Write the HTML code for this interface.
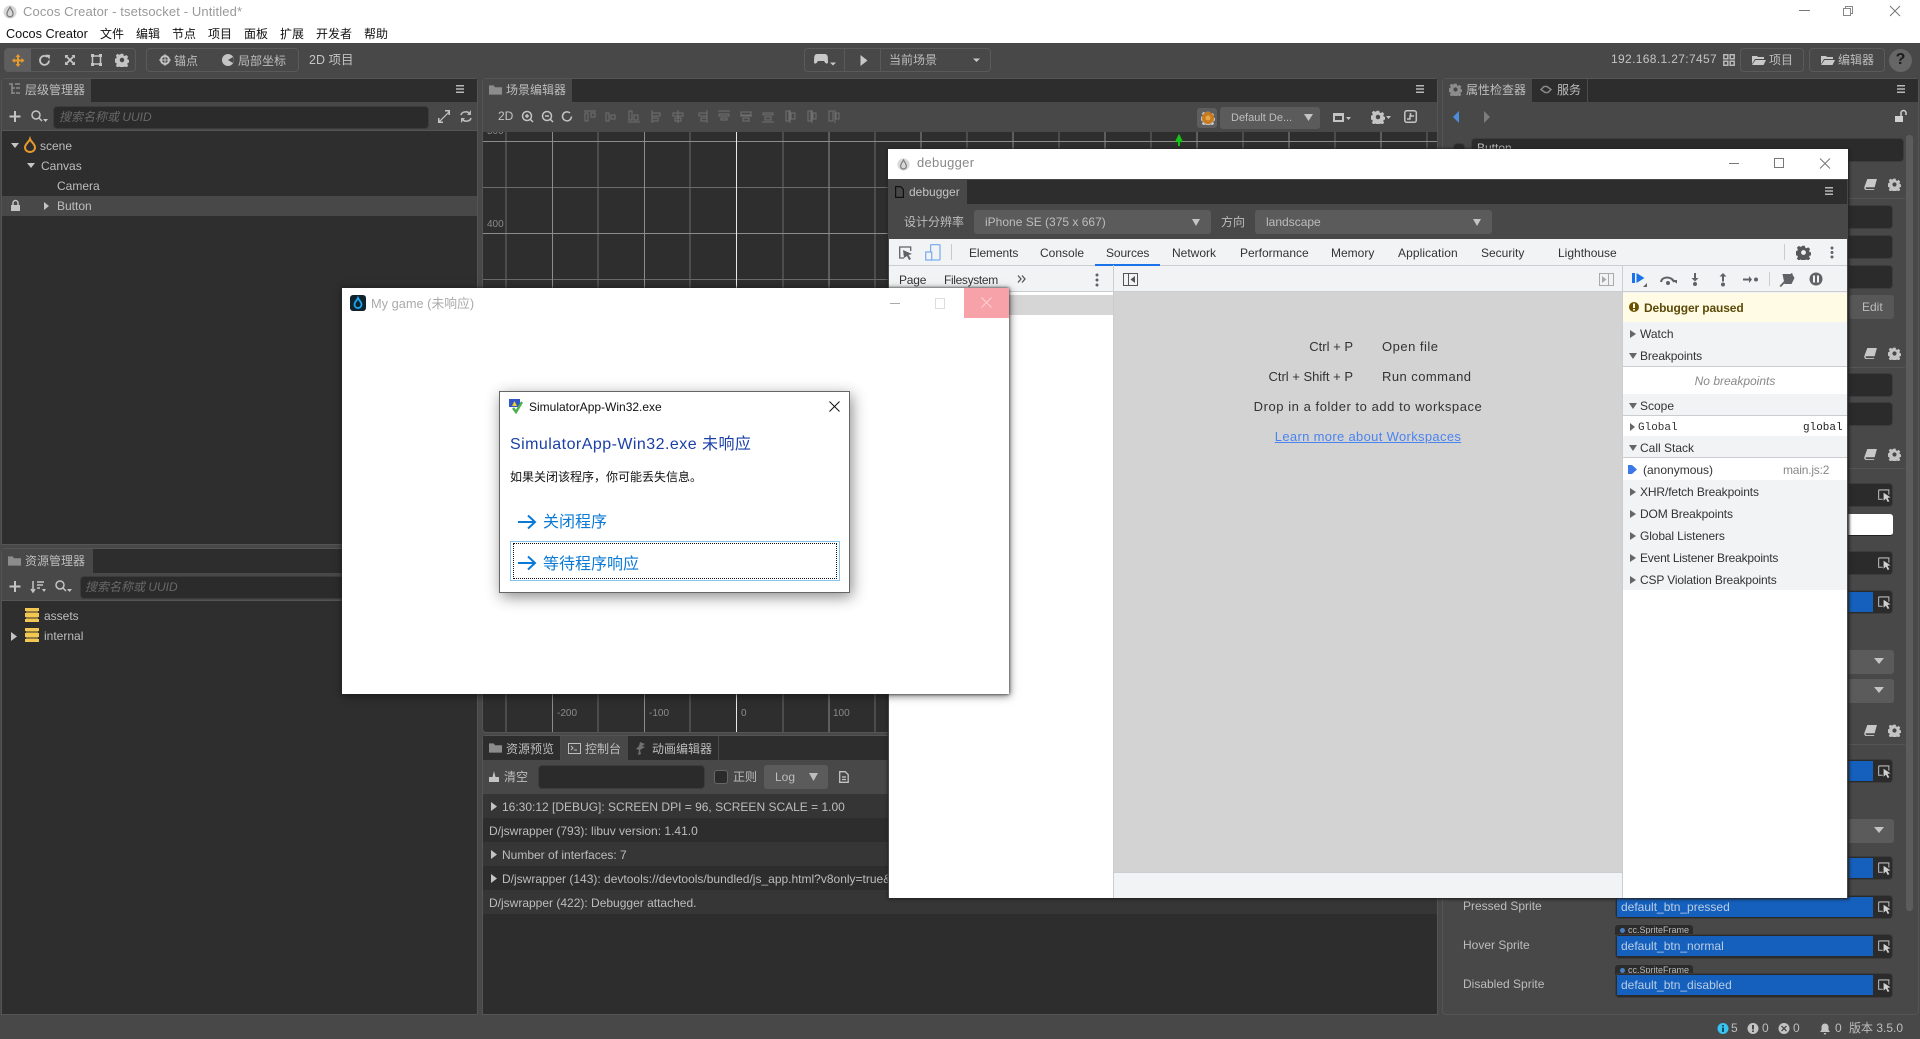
<!DOCTYPE html>
<html lang="zh"><head><meta charset="utf-8"><title>Cocos Creator - tsetsocket - Untitled*</title>
<style>
html,body{margin:0;padding:0}
body{width:1920px;height:1039px;overflow:hidden;position:relative;background:#484848;font:12px/16px "Liberation Sans","Noto Sans CJK SC",sans-serif;color:#bdbdbd}
.a{position:absolute;box-sizing:border-box}
.t{position:absolute;white-space:nowrap;line-height:16px}
svg{position:absolute;overflow:visible}
.in{position:absolute;box-sizing:border-box;background:#2b2b2b;border:1px solid #3c3c3c;border-radius:4px}
.sel{position:absolute;background:#5b5b5b;border-radius:3px}
.tab{position:absolute;background:#484848;box-sizing:border-box}
.h{position:absolute;background:#2d2d2d}
.m{color:#111}
.dv{color:#333}
.sb{letter-spacing:-.12px}
.blue{position:absolute;background:#1560bd}
.tag{position:absolute;background:#2b2b2b;border-radius:3px 3px 0 0;height:10px;width:78px;left:1615px;font-size:9px;line-height:10px;color:#bbb;white-space:nowrap;padding-left:13px;box-sizing:border-box}
.tag:before{content:"";position:absolute;left:5px;top:3px;width:5px;height:5px;border-radius:3px;background:#4a7fc4}
</style></head><body>
<svg width="0" height="0" style="position:absolute"><defs>
<symbol id="gear" viewBox="0 0 14 14"><path fill="#c4c4c4" d="M5.6 0h2.8l.4 2 1.4.6 1.7-1.1 2 2-1.1 1.7.6 1.4 2 .4v2.8l-2 .4-.6 1.4 1.1 1.7-2 2-1.700-1.100-1.400.6-.4 2H5.600l-.4-2-1.400-.6-1.700 1.100-2-2 1.100-1.700-.6-1.400-2-.4V5.600l2-.4.6-1.400-1.100-1.700 2-2 1.700 1.100 1.400-.6zM7 4.500a2.500 2.500 0 1 0 0 5 2.500 2.500 0 0 0 0-5z" transform="translate(.7 .7) scale(.9)"/></symbol>
<symbol id="book" viewBox="0 0 14 12"><path fill="#c8c8c8" d="M3.500 0H14l-2.500 9H1.800C1.300 10.500 2.300 11 3 11h8v1H2.500C.8 12-.2 10.500.4 8.500z"/></symbol>
<symbol id="pick" viewBox="0 0 14 14"><path fill="none" stroke="#bdbdbd" stroke-width="1.100" d="M.7 1h11v5M5 11H.7V1"/><path fill="#d0d0d0" d="M6 4l7.500 5-3.300.6 2 3.600-1.800.8-1.900-3.600L6 12.600z"/></symbol>
<symbol id="folder" viewBox="0 0 14 10"><path fill="#c8c8c8" d="M0 1h5l1 1h6v2H3L0 9zM3.500 5H14l-2.500 5H0z"/></symbol>
<symbol id="bars" viewBox="0 0 8 8"><path fill="#b8b8b8" d="M0 0h8v1.500H0zM0 3.250h8v1.500H0zM0 6.500h8V8H0z"/></symbol>
<symbol id="fold" viewBox="0 0 14 12"><path fill="#8c8c8c" d="M0 1h5l1.500 2H14v8H0z"/></symbol>
<symbol id="drop" viewBox="0 0 16 16"><circle cx="8" cy="8" r="7.500" fill="#d8d8d8"/><path fill="none" stroke="#7d7d7d" stroke-width="1.500" d="M8 2.500C6 6 4.500 7.500 4.500 10a3.500 3.500 0 0 0 7 0C11.500 7.500 10 6 8 2.500z"/></symbol>
</defs></svg>

<!-- title bar -->
<div class="a" style="left:0;top:0;width:1920px;height:43px;background:#fff"></div>
<svg style="left:3px;top:4px" width="14" height="16"><use href="#drop" width="14" height="14" y="1"/></svg>
<div class="t" style="left:23px;top:4px;font-size:13px;color:#999;letter-spacing:.12px">Cocos Creator - tsetsocket - Untitled*</div>
<div class="t m" style="left:6px;top:26px;font-size:12.700px">Cocos Creator</div>
<div class="t m" style="left:100px;top:26px">文件</div><div class="t m" style="left:136px;top:26px">编辑</div><div class="t m" style="left:172px;top:26px">节点</div><div class="t m" style="left:208px;top:26px">项目</div><div class="t m" style="left:244px;top:26px">面板</div><div class="t m" style="left:280px;top:26px">扩展</div><div class="t m" style="left:316px;top:26px">开发者</div><div class="t m" style="left:364px;top:26px">帮助</div>
<svg style="left:1798px;top:5px" width="115" height="12"><path d="M1 5.500h11" stroke="#777" fill="none"/><path d="M45.500 3.500h7v7h-7zM47.500 3.500v-2h7v7h-2" stroke="#888" fill="none"/><path d="M92 1l10 10M102 1L92 11" stroke="#777" fill="none"/></svg>

<!-- main toolbar -->
<div class="a" style="left:4px;top:48px;width:132px;height:24px;border:1px solid #5a5a5a;border-radius:4px"></div>
<div class="a" style="left:5px;top:49px;width:26px;height:22px;background:#5e5e5e;border-radius:3px 0 0 3px"></div>
<svg style="left:12px;top:54px" width="120" height="13">
<path fill="#e79a2c" d="M6 0l2.500 3H7v2.500h2.500V4l3 2.500-3 2.500V7.500H7V10h1.500L6 13 3.500 10H5V7.500H2.500V9l-2.500-2.500L2.500 4v1.500H5V3H3.500z"/>
<path fill="none" stroke="#c4c4c4" stroke-width="1.800" d="M35.500 3a4.500 4.500 0 1 0 1.500 3.500"/><path fill="#c4c4c4" d="M33.500 0.500l4.500 .5-.5 4.500z"/>
<path fill="none" stroke="#c4c4c4" stroke-width="1.800" d="M54 2l8 8M62 2l-8 8"/><path fill="#c4c4c4" d="M53 1h3.500L53 4.500zM63 1v3.500L59.500 1zM53 11V7.500L56.500 11zM63 11h-3.500L63 7.500z"/>
<path fill="none" stroke="#c4c4c4" stroke-width="1.500" d="M80.500 2h8v8h-8z"/><path fill="#c4c4c4" d="M79 0h3v3h-3zM87 0h3v3h-3zM79 9h3v3h-3zM87 9h3v3h-3z"/>
</svg>
<svg style="left:115px;top:53px" width="14" height="14"><use href="#gear" width="14" height="14"/></svg>
<div class="a" style="left:146px;top:48px;width:153px;height:24px;border:1px solid #5a5a5a;border-radius:4px"></div>
<svg style="left:159px;top:54px" width="80" height="13"><circle cx="6" cy="6" r="4" fill="none" stroke="#c4c4c4" stroke-width="2"/><path stroke="#c4c4c4" d="M6 0v12M0 6h12"/><circle cx="69" cy="6" r="6" fill="#c4c4c4"/><path fill="#484848" d="M69 6l5-3 1 3-1 3z"/></svg>
<div class="t" style="left:174px;top:53px">锚点</div><div class="t" style="left:238px;top:53px">局部坐标</div>
<div class="t" style="left:309px;top:52px;font-size:12.500px;color:#c4c4c4">2D 项目</div>

<div class="a" style="left:804px;top:48px;width:187px;height:24px;border:1px solid #5a5a5a;border-radius:4px"></div>
<div class="a" style="left:844px;top:49px;width:1px;height:22px;background:#5a5a5a"></div><div class="a" style="left:880px;top:49px;width:1px;height:22px;background:#5a5a5a"></div>
<svg style="left:814px;top:53px" width="170" height="14"><path fill="#c8c8c8" d="M3 1h8c1.500 0 2.500 1 2.800 3L14 9c0 2-2 2-3 .5L10 8H4L3 9.500C2 11 0 11 0 9l.2-5C.5 2 1.500 1 3 1z"/><path fill="#c8c8c8" d="M16 9.500h6l-3 3zM46.500 2l7 5.500-7 5.500zM159 5.500h7l-3.500 3.500z"/></svg>
<div class="t" style="left:889px;top:52px">当前场景</div>

<div class="t" style="left:1611px;top:51px;color:#c4c4c4;letter-spacing:.35px">192.168.1.27:7457</div>
<svg style="left:1723px;top:54px" width="12" height="12"><path fill="none" stroke="#b8b8b8" stroke-width="1.500" d="M.8.8h4v4h-4zM7.200.8h4v4h-4zM.8 7.200h4v4h-4zM7.200 7.200h4v4h-4z"/></svg>
<div class="a" style="left:1740px;top:48px;width:64px;height:24px;border:1px solid #5a5a5a;border-radius:4px"></div>
<div class="a" style="left:1809px;top:48px;width:76px;height:24px;border:1px solid #5a5a5a;border-radius:4px"></div>
<svg style="left:1752px;top:55px" width="14" height="10"><use href="#folder" width="14" height="10"/></svg><div class="t" style="left:1769px;top:52px">项目</div>
<svg style="left:1821px;top:55px" width="14" height="10"><use href="#folder" width="14" height="10"/></svg><div class="t" style="left:1838px;top:52px">编辑器</div>
<div class="a" style="left:1889px;top:49px;width:23px;height:23px;border-radius:50%;background:#666"></div>
<div class="t" style="left:1889px;top:52px;width:23px;text-align:center;font-size:16px;font-weight:bold;color:#1b1b1b">?</div>

<!-- hierarchy -->
<div class="a" style="left:1px;top:78px;width:477px;height:467px;background:#2e2e2e;border:1px solid #555;border-radius:4px 4px 0 0"></div>
<div class="h" style="left:2px;top:79px;width:475px;height:23px"></div>
<div class="a" style="left:2px;top:102px;width:475px;height:29px;background:#484848;border-bottom:1px solid #555"></div>
<div class="tab" style="left:2px;top:79px;width:89px;height:24px"></div>
<svg style="left:9px;top:83px" width="12" height="12"><path fill="none" stroke="#8c8c8c" stroke-width="1.500" d="M0 1h4M6 1h5M3 1v10M3 5h3M3 10h3M7 5h4M7 10h4"/></svg>
<div class="t" style="left:25px;top:82px">层级管理器</div>
<svg style="left:456px;top:85px" width="8" height="8"><use href="#bars" width="8" height="8"/></svg>
<svg style="left:9px;top:110px" width="44" height="14"><path fill="none" stroke="#c4c4c4" stroke-width="2" d="M6 1v11M.5 6.500h11"/><circle cx="27" cy="5" r="4" fill="none" stroke="#c4c4c4" stroke-width="1.500"/><path d="M30 8l3 3" stroke="#c4c4c4" stroke-width="1.500"/><path fill="#c4c4c4" d="M34 9h5l-2.500 3z"/></svg>
<div class="in" style="left:53px;top:106px;width:376px;height:23px"></div>
<div class="t" style="left:59px;top:109px;color:#686868;font-style:italic">搜索名称或 UUID</div>
<svg style="left:438px;top:110px" width="36" height="13"><path fill="none" stroke="#c4c4c4" stroke-width="1.200" d="M1 12l10-10"/><path fill="#c4c4c4" d="M7 0h5v5h-1.500V1.500H7zM0 8h1.500v3.500H5V13H0z"/><path fill="none" stroke="#b8b8b8" stroke-width="1.600" d="M23 5c1-4 7-4 9-1M33 8c-1 4-7 4-9 1"/><path fill="#b8b8b8" d="M33 0v5h-4zM23 13V8h4z"/></svg>
<svg style="left:11px;top:143px" width="8" height="5"><path fill="#c4c4c4" d="M0 0h8L4 5z"/></svg>
<svg style="left:24px;top:138px" width="12" height="15"><path fill="none" stroke="#e79a2c" stroke-width="2" d="M6 1c-1 3-5 5-5 8.500a5 4.500 0 0 0 10 0C11 6 7 4 6 1z"/></svg>
<div class="t" style="left:40px;top:138px">scene</div>
<svg style="left:27px;top:163px" width="8" height="5"><path fill="#c4c4c4" d="M0 0h8L4 5z"/></svg>
<div class="t" style="left:41px;top:158px">Canvas</div>
<div class="t" style="left:57px;top:178px">Camera</div>
<div class="a" style="left:2px;top:196px;width:475px;height:20px;background:#484848"></div>
<svg style="left:11px;top:200px" width="9" height="11"><path fill="#c4c4c4" d="M0 5h9v6H0z"/><path fill="none" stroke="#c4c4c4" stroke-width="1.500" d="M2 5V3a2.500 2.500 0 0 1 5 0v2"/></svg>
<svg style="left:44px;top:202px" width="5" height="8"><path fill="#c4c4c4" d="M0 0l5 4-5 4z"/></svg>
<div class="t" style="left:57px;top:198px">Button</div>

<!-- assets -->
<div class="a" style="left:1px;top:548px;width:477px;height:467px;background:#2e2e2e;border:1px solid #555;border-radius:4px 4px 0 0"></div>
<div class="h" style="left:2px;top:549px;width:475px;height:24px"></div>
<div class="a" style="left:2px;top:573px;width:475px;height:28px;background:#484848;border-bottom:1px solid #555"></div>
<div class="tab" style="left:2px;top:549px;width:91px;height:25px"></div>
<svg style="left:8px;top:555px" width="13" height="12"><use href="#fold" width="13" height="12"/></svg>
<div class="t" style="left:25px;top:553px">资源管理器</div>
<svg style="left:9px;top:580px" width="66" height="14"><path fill="none" stroke="#c4c4c4" stroke-width="2" d="M6 1v11M.5 6.500h11"/><path fill="none" stroke="#c4c4c4" stroke-width="1.500" d="M24 1v10M22 9l2 3 2-3M28 2h7M28 5h6M28 8h3"/><path fill="#c4c4c4" d="M33 9h4l-2 3z"/><circle cx="51" cy="5" r="4" fill="none" stroke="#c4c4c4" stroke-width="1.500"/><path d="M54 8l3 3" stroke="#c4c4c4" stroke-width="1.500"/><path fill="#c4c4c4" d="M58 9h5l-2.500 3z"/></svg>
<div class="in" style="left:80px;top:576px;width:396px;height:23px"></div>
<div class="t" style="left:85px;top:579px;color:#686868;font-style:italic">搜索名称或 UUID</div>
<svg style="left:25px;top:608px" width="14" height="14"><path fill="#f3c852" d="M0 0h14v3H0zM0 5h14v4H0zM0 11h14v3H0z"/><path fill="#f3c852" opacity=".5" d="M1 3h12v2H1zM1 9h12v2H1z"/></svg>
<div class="t" style="left:44px;top:608px">assets</div>
<svg style="left:11px;top:632px" width="6" height="9"><path fill="#c4c4c4" d="M0 0l6 4.500L0 9z"/></svg>
<svg style="left:25px;top:628px" width="14" height="14"><path fill="#f3c852" d="M0 0h14v3H0zM0 5h14v4H0zM0 11h14v3H0z"/><path fill="#f3c852" opacity=".5" d="M1 3h12v2H1zM1 9h12v2H1z"/></svg>
<div class="t" style="left:44px;top:628px">internal</div>

<!-- scene -->
<div class="a" style="left:482px;top:78px;width:956px;height:655px;background:#2e2e2e;border:1px solid #555;border-radius:4px"></div>
<div class="h" style="left:483px;top:79px;width:954px;height:23px"></div>
<div class="a" style="left:483px;top:102px;width:954px;height:30px;background:#484848"></div>
<div class="tab" style="left:483px;top:79px;width:89px;height:24px"></div>
<svg style="left:489px;top:84px" width="13" height="12"><use href="#fold" width="13" height="12"/></svg>
<div class="t" style="left:506px;top:82px">场景编辑器</div>
<svg style="left:1416px;top:85px" width="8" height="8"><use href="#bars" width="8" height="8"/></svg>
<div class="t" style="left:498px;top:108px;color:#c4c4c4">2D</div>
<svg style="left:521px;top:110px" width="320" height="14"><g fill="none" stroke="#c4c4c4" stroke-width="1.500"><circle cx="6" cy="6" r="4.500"/><path d="M9 9l3 3M4 6h4M6 4v4"/><circle cx="26" cy="6" r="4.500"/><path d="M29 9l3 3M24 6h4"/><path d="M49 3a4.500 4.500 0 1 0 1.500 3.500"/></g>
<g fill="none" stroke="#6f6f6f">
<path transform="translate(69 0)" d="M-6 1H6M-5 3h3v8h-3zM1 3h4v4H1z"/>
<path transform="translate(90 0)" d="M-5 3h3v8h-3zM0 5h4v4H0z"/>
<path transform="translate(113 0)" d="M-6 12H6M-5 1h3v9h-3zM0 5h4v5H0z"/>
<path transform="translate(136 0)" d="M-5 0v13M-5 3h8v3h-8zM-5 8h6v3h-6z"/>
<path transform="translate(157 0)" d="M0 0v13M-5 3H5v3H-5zM-3 8h6v3h-6z"/>
<path transform="translate(181 0)" d="M5 0v13M-3 3h8v3h-8zM-1 8h6v3h-6z"/>
<path transform="translate(203 0)" d="M-6 1H6M-5 4H5v2H-5zM-3 8h6v2h-6z"/>
<path transform="translate(225 0)" d="M-6 6H6M-5 2H5v3H-5zM-3 8h6v3h-6z"/>
<path transform="translate(247 0)" d="M-6 12H6M-5 3H5v2H-5zM-3 7h6v3h-6z"/>
<path transform="translate(269 0)" d="M0 0v13M-4 1h3v10h-3zM1 3h4v6H1z"/>
<path transform="translate(291 0)" d="M0 0v13M-4 1h3v10h-3zM1 3h3v6H1z"/>
<path transform="translate(313 0)" d="M1 0v13M-5 1h4v10h-4zM2 3h3v6H2z"/>
</g></svg>
<div class="a" style="left:1197px;top:108px;width:20px;height:20px;background:#5e5e5e;border-radius:3px"></div>
<svg style="left:1201px;top:111px" width="14" height="14"><use href="#gear" width="14" height="14"/><circle cx="7" cy="7" r="6" fill="#c77a1e"/><circle cx="7" cy="7" r="2.500" fill="#e8a84a"/></svg>
<div class="sel" style="left:1220px;top:107px;width:100px;height:22px"></div>
<div class="t" style="left:1231px;top:110px;font-size:11px">Default De...</div>
<svg style="left:1304px;top:114px" width="9" height="7"><path fill="#c4c4c4" d="M0 0h9L4.500 7z"/></svg>
<svg style="left:1333px;top:111px" width="18" height="13"><path fill="#c4c4c4" d="M0 2h11v9H0z"/><path fill="#484848" d="M2 5h7v4H2z"/><path fill="#c4c4c4" d="M13 6h5l-2.500 3z"/></svg>
<svg style="left:1371px;top:110px" width="20" height="14"><use href="#gear" width="14" height="14"/><path fill="#c4c4c4" d="M15 6h5l-2.500 3z"/></svg>
<svg style="left:1404px;top:110px" width="13" height="13"><rect x=".8" y=".8" width="11.500" height="11.500" rx="2" fill="none" stroke="#c4c4c4" stroke-width="1.500"/><path fill="none" stroke="#c4c4c4" stroke-width="1.500" d="M3 9h3V6h4M6.500 3v3"/></svg>

<svg style="left:483px;top:132px" width="954" height="600">
<g stroke="#6a6a6a"><path d="M23 0v600M115 0v600M207 0v600M300 0v600M392 0v600M484 0v600M576 0v600M668 0v600M760 0v600M852 0v600M944 0v600"/><path d="M0 55.500h954M0 147.500h954"/></g>
<g stroke="#8c8c8c"><path d="M69.500 0v600M161.500 0v600M346 0v600M438 0v600M530 0v600M622 0v600M714 0v600M806 0v600M898 0v600"/><path d="M0 9.500h954M0 101.500h954"/></g>
<path d="M253.500 0v600" stroke="#e8e8e8"/>
<path d="M696 8v6M693 10l3-6 3 6" stroke="#16c416" stroke-width="2" fill="#16c416"/>
</svg>
<div class="a" style="left:486px;top:132px;width:20px;height:5px;overflow:hidden"><div class="t" style="left:1px;top:-8px;font-size:10px;color:#8a8a8a">500</div></div>
<div class="t" style="left:487px;top:217px;font-size:10px;color:#8a8a8a">400</div>
<div class="t" style="left:557px;top:706px;font-size:10px;color:#8a8a8a">-200</div>
<div class="t" style="left:649px;top:706px;font-size:10px;color:#8a8a8a">-100</div>
<div class="t" style="left:741px;top:706px;font-size:10px;color:#8a8a8a">0</div>
<div class="t" style="left:833px;top:706px;font-size:10px;color:#8a8a8a">100</div>

<!-- console -->
<div class="a" style="left:482px;top:735px;width:956px;height:280px;background:#2d2d2d;border:1px solid #555;border-radius:4px 4px 0 0"></div>
<div class="h" style="left:483px;top:736px;width:954px;height:24px"></div>
<div class="a" style="left:483px;top:760px;width:954px;height:34px;background:#484848"></div>
<div class="a" style="left:560px;top:736px;width:1px;height:24px;background:#4c4c4c"></div>
<div class="tab" style="left:561px;top:736px;width:67px;height:25px"></div>
<div class="a" style="left:718px;top:736px;width:1px;height:24px;background:#4c4c4c"></div>
<svg style="left:489px;top:742px" width="13" height="12"><use href="#fold" width="13" height="12"/></svg>
<div class="t" style="left:506px;top:741px">资源预览</div>
<svg style="left:568px;top:743px" width="13" height="11"><path fill="none" stroke="#bdbdbd" d="M.5.500h12v10H.5z"/><path fill="none" stroke="#bdbdbd" d="M3 3l2 2-2 2M6 7h3"/></svg>
<div class="t" style="left:585px;top:741px">控制台</div>
<svg style="left:635px;top:742px" width="11" height="13"><path fill="#707070" d="M5 0l5 2-3 2 3 1-5 3 1 4-3 1 1-5-3-1 3-3z"/></svg>
<div class="t" style="left:652px;top:741px">动画编辑器</div>
<svg style="left:489px;top:771px" width="10" height="12"><path fill="#c4c4c4" d="M5 0l1.500 6H10v5H0V6h3.500z"/></svg>
<div class="t" style="left:504px;top:769px">清空</div>
<div class="in" style="left:538px;top:765px;width:167px;height:24px"></div>
<div class="a" style="left:714px;top:770px;width:14px;height:14px;background:#2b2b2b;border:1px solid #666;border-radius:3px"></div>
<div class="t" style="left:733px;top:769px">正则</div>
<div class="sel" style="left:764px;top:765px;width:64px;height:24px"></div>
<div class="t" style="left:775px;top:769px">Log</div>
<svg style="left:809px;top:773px" width="9" height="8"><path fill="#bdbdbd" d="M0 0h9L4.500 8z"/></svg>
<svg style="left:839px;top:771px" width="10" height="12"><path fill="none" stroke="#c4c4c4" stroke-width="1.300" d="M.7.700h5.500l3 3v7.600H.7zM3 6h4M3 8.500h4"/></svg>
<div class="a" style="left:483px;top:794px;width:954px;height:24px;background:#353535"></div>
<div class="a" style="left:483px;top:842px;width:954px;height:24px;background:#363636"></div>
<div class="a" style="left:483px;top:890px;width:954px;height:24px;background:#363636"></div>
<svg style="left:491px;top:802px" width="6" height="90"><path fill="#c4c4c4" d="M0 0l6 4.500L0 9zM0 48l6 4.500L0 57zM0 72l6 4.500L0 81z"/></svg>
<div class="t" style="left:502px;top:799px">16:30:12 [DEBUG]: SCREEN DPI = 96, SCREEN SCALE = 1.00</div>
<div class="t" style="left:489px;top:823px">D/jswrapper (793): libuv version: 1.41.0</div>
<div class="t" style="left:502px;top:847px">Number of interfaces: 7</div>
<div class="t" style="left:502px;top:871px">D/jswrapper (143): devtools://devtools/bundled/js_app.html?v8only=true&amp;ws=127.0.0.1</div>
<div class="t" style="left:489px;top:895px">D/jswrapper (422): Debugger attached.</div>

<!-- inspector -->
<div class="a" style="left:1442px;top:78px;width:477px;height:937px;border:1px solid #555;border-radius:4px"></div>
<div class="h" style="left:1443px;top:79px;width:475px;height:23px"></div>
<div class="tab" style="left:1443px;top:79px;width:89px;height:24px"></div>
<div class="a" style="left:1587px;top:79px;width:1px;height:23px;background:#4c4c4c"></div>
<svg style="left:1449px;top:83px" width="13" height="13"><use href="#gear" width="13" height="13" opacity=".55"/></svg>
<div class="t" style="left:1466px;top:82px">属性检查器</div>
<svg style="left:1540px;top:85px" width="12" height="9"><path fill="none" stroke="#888" stroke-width="1.500" d="M1 4.500L4 1.500h3L11 4.500 8 7.500H5z"/></svg>
<div class="t" style="left:1557px;top:82px">服务</div>
<svg style="left:1897px;top:85px" width="8" height="8"><use href="#bars" width="8" height="8"/></svg>
<svg style="left:1453px;top:111px" width="40" height="12"><path fill="#4a8fdc" d="M6 0v12L0 6z"/><path fill="#7c7c7c" d="M31 0l6 6-6 6z"/></svg>
<svg style="left:1895px;top:110px" width="13" height="13"><path fill="#d0d0d0" d="M0 6h8v6H0z"/><path fill="none" stroke="#d0d0d0" stroke-width="1.500" d="M6 6V3a2.500 2.500 0 0 1 5 0v2"/></svg>
<div class="a" style="left:1906px;top:135px;width:7px;height:776px;background:#5c5c5c;border-radius:3px"></div>
<div class="in" style="left:1471px;top:138px;width:433px;height:24px"></div>
<div class="t" style="left:1477px;top:140px;height:9px;overflow:hidden">Button</div>
<div class="in" style="left:1453px;top:143px;width:12px;height:14px"></div>
<svg style="left:1864px;top:178px" width="38" height="14"><use href="#book" width="13" height="11" y="1"/><use href="#gear" x="24" width="13" height="13"/></svg>
<div class="a" style="left:1460px;top:198px;width:445px;height:1px;background:#555"></div>
<div class="in" style="left:1800px;top:205px;width:93px;height:24px"></div>
<div class="in" style="left:1800px;top:235px;width:93px;height:24px"></div>
<div class="in" style="left:1800px;top:265px;width:93px;height:24px"></div>
<div class="sel" style="left:1849px;top:295px;width:45px;height:24px;background:#575757"></div>
<div class="t" style="left:1862px;top:299px;color:#bdbdbd">Edit</div>
<svg style="left:1864px;top:347px" width="38" height="14"><use href="#book" width="13" height="11" y="1"/><use href="#gear" x="24" width="13" height="13"/></svg>
<div class="a" style="left:1460px;top:367px;width:445px;height:1px;background:#555"></div>
<div class="in" style="left:1800px;top:373px;width:93px;height:24px"></div>
<div class="in" style="left:1800px;top:402px;width:93px;height:24px"></div>
<svg style="left:1864px;top:448px" width="38" height="14"><use href="#book" width="13" height="11" y="1"/><use href="#gear" x="24" width="13" height="13"/></svg>
<div class="a" style="left:1460px;top:468px;width:445px;height:1px;background:#555"></div>
<div class="in" style="left:1800px;top:483px;width:93px;height:24px"></div>
<div class="a" style="left:1800px;top:514px;width:93px;height:22px;background:linear-gradient(90deg,#bbb,#fff 25%);border-radius:3px;border-bottom:1px solid #222"></div>
<div class="in" style="left:1800px;top:551px;width:93px;height:24px"></div>
<div class="in" style="left:1800px;top:590px;width:93px;height:24px"></div><div class="blue" style="left:1800px;top:592px;width:73px;height:20px"></div>
<div class="sel" style="left:1800px;top:650px;width:94px;height:24px"></div><div class="sel" style="left:1800px;top:679px;width:94px;height:24px"></div>
<svg style="left:1874px;top:658px" width="10" height="37"><path fill="#c4c4c4" d="M0 0h10L5 6zM0 29h10l-5 6z"/></svg>
<svg style="left:1864px;top:724px" width="38" height="14"><use href="#book" width="13" height="11" y="1"/><use href="#gear" x="24" width="13" height="13"/></svg>
<div class="a" style="left:1460px;top:744px;width:445px;height:1px;background:#555"></div>
<div class="in" style="left:1800px;top:759px;width:93px;height:24px"></div><div class="blue" style="left:1800px;top:761px;width:73px;height:20px"></div>
<div class="sel" style="left:1800px;top:819px;width:94px;height:24px"></div>
<svg style="left:1874px;top:827px" width="10" height="7"><path fill="#c4c4c4" d="M0 0h10L5 6z"/></svg>
<div class="in" style="left:1800px;top:856px;width:93px;height:24px"></div><div class="blue" style="left:1800px;top:858px;width:73px;height:20px"></div>
<svg style="left:1878px;top:489px" width="13" height="13"><use href="#pick" width="13" height="13"/></svg>
<svg style="left:1878px;top:557px" width="13" height="13"><use href="#pick" width="13" height="13"/></svg>
<svg style="left:1878px;top:596px" width="13" height="13"><use href="#pick" width="13" height="13"/></svg>
<svg style="left:1878px;top:765px" width="13" height="13"><use href="#pick" width="13" height="13"/></svg>
<svg style="left:1878px;top:862px" width="13" height="13"><use href="#pick" width="13" height="13"/></svg>

<div class="t" style="left:1463px;top:898px">Pressed Sprite</div>
<div class="in" style="left:1615px;top:895px;width:278px;height:24px"></div>
<div class="blue" style="left:1617px;top:897px;width:256px;height:20px"></div>
<div class="t" style="left:1621px;top:899px;color:#b9cde4">default_btn_pressed</div>
<svg style="left:1878px;top:901px" width="13" height="13"><use href="#pick" width="13" height="13"/></svg>
<div class="tag" style="top:925px">cc.SpriteFrame</div>
<div class="t" style="left:1463px;top:937px">Hover Sprite</div>
<div class="in" style="left:1615px;top:934px;width:278px;height:25px"></div>
<div class="blue" style="left:1617px;top:936px;width:256px;height:20px"></div>
<div class="t" style="left:1621px;top:938px;color:#b9cde4">default_btn_normal</div>
<svg style="left:1878px;top:940px" width="13" height="13"><use href="#pick" width="13" height="13"/></svg>
<div class="tag" style="top:965px">cc.SpriteFrame</div>
<div class="t" style="left:1463px;top:976px">Disabled Sprite</div>
<div class="in" style="left:1615px;top:973px;width:278px;height:25px"></div>
<div class="blue" style="left:1617px;top:975px;width:256px;height:20px"></div>
<div class="t" style="left:1621px;top:977px;color:#b9cde4">default_btn_disabled</div>
<svg style="left:1878px;top:979px" width="13" height="13"><use href="#pick" width="13" height="13"/></svg>

<!-- status bar -->
<svg style="left:1717px;top:1022px" width="120" height="13"><circle cx="6" cy="6.500" r="5.500" fill="#38c4f0"/><path d="M5 3h2v1.500H5zM5 5.500h2V10H5z" fill="#1a4a60"/><circle cx="36" cy="6.500" r="5.500" fill="#c4c4c4"/><path d="M35 3h2v4.500h-2zM35 8.500h2V10h-2z" fill="#484848"/><circle cx="67" cy="6.500" r="5.500" fill="#c4c4c4"/><path d="M64.500 4l5 5M69.500 4l-5 5" stroke="#484848" stroke-width="1.300"/><path d="M108 1.500a3.500 3.500 0 0 1 3.500 3.500v3l1.500 2H103l1.500-2V5A3.500 3.500 0 0 1 108 1.500zM106.500 11h3l-1.500 2z" fill="#c4c4c4"/></svg>
<div class="t" style="left:1731px;top:1020px">5</div><div class="t" style="left:1762px;top:1020px">0</div><div class="t" style="left:1793px;top:1020px">0</div><div class="t" style="left:1835px;top:1020px">0</div><div class="t" style="left:1849px;top:1020px">版本 3.5.0</div>

<!-- debugger window -->
<div class="a" style="left:888px;top:149px;width:960px;height:749px;background:#484848;box-shadow:0 0 3px #222,1px 1px 3px #222"></div>
<div class="a" style="left:888px;top:149px;width:960px;height:30px;background:#fff"></div>
<svg style="left:897px;top:158px" width="13" height="13"><use href="#drop" width="13" height="13"/></svg>
<div class="t" style="left:917px;top:155px;font-size:13px;color:#888;letter-spacing:.3px">debugger</div>
<svg style="left:1729px;top:157px" width="102" height="12"><path d="M0 6.500h10" stroke="#777" fill="none"/><path d="M45.500 1.500h9v9h-9z" stroke="#777" fill="none"/><path d="M91 1.500l10 10M101 1.500l-10 10" stroke="#777" fill="none"/></svg>
<div class="h" style="left:889px;top:180px;width:958px;height:24px"></div>
<div class="tab" style="left:889px;top:180px;width:78px;height:25px"></div>
<svg style="left:895px;top:186px" width="9" height="12"><path fill="none" stroke="#111" stroke-width="1.200" d="M.6.600h5l2.800 2.800v8H.6z"/></svg>
<div class="t" style="left:909px;top:184px;color:#c4c4c4">debugger</div>
<svg style="left:1825px;top:187px" width="8" height="8"><use href="#bars" width="8" height="8"/></svg>
<div class="t" style="left:904px;top:214px">设计分辨率</div>
<div class="sel" style="left:974px;top:210px;width:237px;height:24px"></div>
<div class="t" style="left:985px;top:214px">iPhone SE (375 x 667)</div>
<svg style="left:1192px;top:219px" width="8" height="7"><path fill="#c4c4c4" d="M0 0h8L4 7z"/></svg>
<div class="t" style="left:1221px;top:214px">方向</div>
<div class="sel" style="left:1255px;top:210px;width:237px;height:24px"></div>
<div class="t" style="left:1266px;top:214px">landscape</div>
<svg style="left:1473px;top:219px" width="8" height="7"><path fill="#c4c4c4" d="M0 0h8L4 7z"/></svg>

<!-- devtools -->
<div class="a" style="left:889px;top:239px;width:958px;height:659px;background:#f1f3f4"></div>
<div class="a" style="left:889px;top:265px;width:958px;height:1px;background:#cbcdd1"></div>
<div class="a" style="left:889px;top:291px;width:958px;height:1px;background:#cbcdd1"></div>
<svg style="left:899px;top:246px" width="56" height="16"><path fill="none" stroke="#5f6368" stroke-width="1.300" d="M5 12H.7V1h11v4"/><path fill="#5f6368" d="M4 4l9 4-3.500 1 2.500 4-2 1-2-4-3 2z"/><rect x="31.600" y="-1.400" width="9.400" height="15.400" rx="1" fill="none" stroke="#7fb0ee" stroke-width="1.300"/><rect x="26.700" y="6" width="6" height="8" fill="#f1f3f4" stroke="#7fb0ee" stroke-width="1.300"/><path stroke="#c8c8c8" d="M52.500-2v16"/></svg>
<div class="t dv" style="left:969px;top:245px;letter-spacing:-.1px">Elements</div>
<div class="t dv" style="left:1040px;top:245px">Console</div>
<div class="t dv" style="left:1106px;top:245px;letter-spacing:-.1px">Sources</div>
<div class="a" style="left:1095px;top:264px;width:65px;height:2px;background:#1a73e8"></div>
<div class="t dv" style="left:1172px;top:245px">Network</div>
<div class="t dv" style="left:1240px;top:245px">Performance</div>
<div class="t dv" style="left:1331px;top:245px">Memory</div>
<div class="t dv" style="left:1398px;top:245px;letter-spacing:.1px">Application</div>
<div class="t dv" style="left:1481px;top:245px">Security</div>
<div class="t dv" style="left:1558px;top:245px">Lighthouse</div>
<div class="a" style="left:1784px;top:244px;width:1px;height:16px;background:#ccc"></div>
<svg style="left:1796px;top:245px" width="40" height="15"><use href="#gear" width="15" height="15" style="filter:brightness(.45)"/><circle cx="36" cy="3" r="1.500" fill="#5f6368"/><circle cx="36" cy="7.500" r="1.500" fill="#5f6368"/><circle cx="36" cy="12" r="1.500" fill="#5f6368"/></svg>

<div class="t dv" style="left:899px;top:272px;letter-spacing:-.2px">Page</div>
<div class="t dv" style="left:944px;top:272px;letter-spacing:-.35px">Filesystem</div>
<svg style="left:1017px;top:275px" width="9" height="8"><path fill="none" stroke="#555" stroke-width="1.300" d="M1 .5L4 4 1 7.500M5 .5L8 4 5 7.500"/></svg>
<svg style="left:1095px;top:273px" width="4" height="14"><circle cx="2" cy="2" r="1.500" fill="#5f6368"/><circle cx="2" cy="7" r="1.500" fill="#5f6368"/><circle cx="2" cy="12" r="1.500" fill="#5f6368"/></svg>
<div class="a" style="left:1113px;top:265px;width:1px;height:633px;background:#cbcdd1"></div>
<svg style="left:1123px;top:273px" width="15" height="13"><path fill="none" stroke="#555" d="M.5.500h14v12H.5zM5.500.5v12"/><path fill="#555" d="M12 3v7L7.500 6.500z"/></svg>
<svg style="left:1599px;top:273px" width="15" height="13"><path fill="none" stroke="#aaa" d="M.5.500h14v12H.5zM9.500.5v12"/><path fill="#aaa" d="M3 3v7l4.500-3.500z"/></svg>
<div class="a" style="left:1622px;top:265px;width:1px;height:633px;background:#cbcdd1"></div>
<svg style="left:1632px;top:272px" width="196" height="16"><path fill="#1a73e8" d="M0 1h3v10H0zM4.500 1l8 5-8 5z"/><path fill="#5f6368" d="M11 15l4-4v4z"/>
<g fill="#5f6368"><path fill="none" stroke="#5f6368" stroke-width="2" d="M29 10c1-6 11-6 13 0"/><path d="M39 8h6v3.500zM36 9a2 2 0 1 1 0 4 2 2 0 0 1 0-4z"/>
<path d="M62 1h2v5h2.500L63 9.500 59.500 6H62zM63 10a2 2 0 1 1 0 4 2 2 0 0 1 0-4z"/>
<path d="M90 9.500h2v-5h2.500L91 1l-3.500 3.500H90zM91 10.500a2 2 0 1 1 0 4 2 2 0 0 1 0-4z"/>
<path d="M111 6.500h6V4l3 3.500-3 3.500V8.500h-6zM124 5.500a2 2 0 1 1 0 4 2 2 0 0 1 0-4z"/>
<path d="M150.500 2h8c2 0 3 2 4 4l-3 6h-7zM147.500 14l12-13 1.500 1-12 13z"/><circle cx="184" cy="7" r="6.500"/></g>
<path stroke="#ccc" d="M137.500 0v14"/><path fill="#f1f3f4" d="M181 3.500h2v7h-2zM185 3.500h2v7h-2z"/></svg>
<div class="a" style="left:1623px;top:293px;width:224px;height:29px;background:#fffbe4"></div>
<svg style="left:1629px;top:301px" width="10" height="12"><circle cx="5" cy="6" r="5" fill="#6a5200"/><path fill="#fffbe4" d="M4 2.500h2v4.500H4zM4 8h2v1.500H4z"/></svg>
<div class="t sb" style="left:1644px;top:300px;font-weight:bold;color:#5c4a08">Debugger paused</div>
<div class="t dv" style="left:1640px;top:326px">Watch</div>
<div class="t dv sb" style="left:1640px;top:348px">Breakpoints</div>
<div class="a" style="left:1623px;top:366px;width:224px;height:28px;background:#fff;border-top:1px solid #cbcdd1"></div>
<div class="t" style="left:1623px;top:373px;width:224px;text-align:center;font-style:italic;color:#888">No breakpoints</div>
<div class="t dv" style="left:1640px;top:398px">Scope</div>
<div class="a" style="left:1623px;top:415px;width:224px;height:21px;background:#fff;border-top:1px solid #cbcdd1"></div>
<div class="t" style="left:1638px;top:420px;font-family:'Liberation Mono',monospace;font-size:11px;color:#333">Global</div>
<div class="t" style="left:1803px;top:420px;font-family:'Liberation Mono',monospace;font-size:11px;color:#222">global</div>
<div class="t dv" style="left:1640px;top:440px">Call Stack</div>
<div class="a" style="left:1623px;top:457px;width:224px;height:23px;background:#fff;border-top:1px solid #cbcdd1"></div>
<svg style="left:1628px;top:464px" width="9" height="11"><path fill="#3c78e8" d="M0 1h4l5 4.500L4 10H0z"/></svg>
<div class="t dv" style="left:1643px;top:462px">(anonymous)</div>
<div class="t" style="left:1783px;top:462px;color:#888;letter-spacing:-.2px">main.js:2</div>
<div class="t dv sb" style="left:1640px;top:484px">XHR/fetch Breakpoints</div>
<div class="t dv sb" style="left:1640px;top:506px">DOM Breakpoints</div>
<div class="t dv sb" style="left:1640px;top:528px">Global Listeners</div>
<div class="t dv sb" style="left:1640px;top:550px;letter-spacing:-.2px">Event Listener Breakpoints</div>
<div class="t dv sb" style="left:1640px;top:572px;letter-spacing:-.15px">CSP Violation Breakpoints</div>
<svg style="left:1629px;top:330px" width="8" height="260"><g fill="#666"><path d="M1 0l6 4-6 4zM0 23h8l-4 6zM0 73h8l-4 6zM1 93l5 4-5 4zM0 115h8l-4 6zM1 158l6 4-6 4zM1 180l6 4-6 4zM1 202l6 4-6 4zM1 224l6 4-6 4zM1 246l6 4-6 4z"/></g></svg>
<div class="a" style="left:1623px;top:590px;width:224px;height:308px;background:#fff"></div>

<div class="a" style="left:889px;top:292px;width:224px;height:606px;background:#fff"></div>
<div class="a" style="left:889px;top:295px;width:224px;height:20px;background:#d6d6d6"></div>
<div class="a" style="left:1114px;top:292px;width:508px;height:580px;background:#d3d3d3"></div>
<div class="a" style="left:1114px;top:872px;width:508px;height:26px;background:#f1f3f4;border-top:1px solid #cbcdd1"></div>
<div class="t" style="left:1253px;top:339px;width:100px;text-align:right;font-size:13px;color:#333">Ctrl + P</div>
<div class="t" style="left:1382px;top:339px;font-size:13px;color:#333;letter-spacing:.5px">Open file</div>
<div class="t" style="left:1223px;top:369px;width:130px;text-align:right;font-size:13px;color:#333">Ctrl + Shift + P</div>
<div class="t" style="left:1382px;top:369px;font-size:13px;color:#333;letter-spacing:.45px">Run command</div>
<div class="t" style="left:1114px;top:399px;width:508px;text-align:center;font-size:13px;color:#333;letter-spacing:.55px">Drop in a folder to add to workspace</div>
<div class="t" style="left:1114px;top:429px;width:508px;text-align:center;font-size:13px;color:#4b84ee;text-decoration:underline;letter-spacing:.33px">Learn more about Workspaces</div>

<!-- game window -->
<div class="a" style="left:342px;top:288px;width:667px;height:406px;background:#fff;box-shadow:0 0 3px #222,1px 2px 8px rgba(0,0,0,.5)"></div>
<div class="a" style="left:350px;top:295px;width:16px;height:16px;background:#10222e;border-radius:3px"></div>
<svg style="left:353px;top:297px" width="10" height="12"><path fill="none" stroke="#18a8f0" stroke-width="1.800" d="M5 1C4 3.500 1.500 5 1.500 7.500a3.500 3.500 0 0 0 7 0C8.500 5 6 3.500 5 1z"/></svg>
<div class="t" style="left:371px;top:296px;font-size:12.800px;color:#aaa">My game (未响应)</div>
<div class="a" style="left:890px;top:303px;width:10px;height:1px;background:#aaa"></div>
<div class="a" style="left:935px;top:298px;width:10px;height:11px;border:1px solid #ddd"></div>
<div class="a" style="left:964px;top:288px;width:45px;height:30px;background:#f7a1a8"></div>
<svg style="left:981px;top:297px" width="11" height="11"><path d="M.5.500l10 10M10.500.5l-10 10" stroke="#fbd3d6" fill="none"/></svg>

<!-- dialog -->
<div class="a" style="left:499px;top:391px;width:351px;height:202px;background:#fff;border:1px solid #666;box-shadow:2px 4px 14px rgba(0,0,0,.45)"></div>
<svg style="left:508px;top:398px" width="16" height="16"><path fill="#3156c8" d="M1 1h11v8H1z"/><path fill="#f0d030" d="M4 8l2.500-5L9 8z"/><path fill="none" stroke="#4cb04c" stroke-width="2.500" d="M5 10l3 4 6-10"/></svg>
<div class="t" style="left:529px;top:399px;color:#111">SimulatorApp-Win32.exe</div>
<svg style="left:829px;top:401px" width="11" height="11"><path d="M.5.500l10 10M10.500.5l-10 10" stroke="#111" fill="none"/></svg>
<div class="t" style="left:510px;top:436px;font-size:16px;line-height:18px;color:#1a3fa8;letter-spacing:.46px">SimulatorApp-Win32.exe 未响应</div>
<div class="t" style="left:510px;top:469px;color:#111">如果关闭该程序，你可能丢失信息。</div>
<svg style="left:517px;top:514px" width="20" height="16"><path fill="none" stroke="#0a7ad6" stroke-width="2" d="M1 8h17M11 1.500L18 8l-7 6.500"/></svg>
<div class="t" style="left:543px;top:515px;font-size:16px;color:#0a7ad6">关闭程序</div>
<div class="a" style="left:510px;top:541px;width:330px;height:40px;border:1px solid #86c4ef"></div>
<div class="a" style="left:513px;top:543px;width:324px;height:36px;border:1px dotted #111"></div>
<svg style="left:517px;top:555px" width="20" height="16"><path fill="none" stroke="#0a7ad6" stroke-width="2" d="M1 8h17M11 1.500L18 8l-7 6.500"/></svg>
<div class="t" style="left:543px;top:557px;font-size:16px;color:#0a7ad6">等待程序响应</div>
</body></html>
